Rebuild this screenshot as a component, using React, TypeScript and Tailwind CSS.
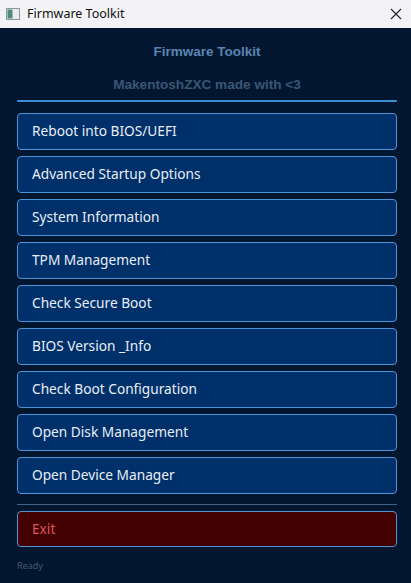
const actions = [
  "Reboot into BIOS/UEFI",
  "Advanced Startup Options",
  "System Information",
  "TPM Management",
  "Check Secure Boot",
  "BIOS Version _Info",
  "Check Boot Configuration",
  "Open Disk Management",
  "Open Device Manager",
]

function WindowIcon() {
  return (
    <svg width="14" height="12" viewBox="0 0 14 12">
      <rect x="0.5" y="0.5" width="13" height="11" fill="#e8ecec" stroke="#8a9a9a" />
      <rect x="1.5" y="1.5" width="5" height="9" fill="#4f8a82" />
    </svg>
  )
}

export default function App() {
  return (
    <div className="flex h-[583px] w-[411px] flex-col overflow-hidden bg-[#02172f] font-['Noto_Sans',sans-serif]">
      {/* title bar */}
      <div className="flex h-[28px] shrink-0 items-center bg-[#f3f3f6] pl-[6px] pr-[3px]">
        <WindowIcon />
        <span className="ml-[7px] text-[12.5px] text-[#111]">Firmware Toolkit</span>
        <span className="ml-auto flex h-[28px] w-[24px] items-center justify-center">
          <svg width="12" height="12" viewBox="0 0 12 12">
            <path d="M1 1L11 11M11 1L1 11" stroke="#222" strokeWidth="1.1" />
          </svg>
        </span>
      </div>

      <div className="flex flex-1 flex-col pl-[17px] pr-[14px]">
        <div className="pt-[15px] text-center font-['Liberation_Sans',sans-serif] text-[13.5px] font-bold leading-[18px] text-[#5b84b2]">
          Firmware Toolkit
        </div>
        <div className="mt-[15px] text-center font-['Liberation_Sans',sans-serif] text-[13.6px] font-bold leading-[18px] text-[#3a5676]">
          MakentoshZXC made with &lt;3
        </div>
        <div className="mt-[6px] h-[2px] rounded-full bg-[#3e8ed6]" />

        <div className="mt-[11px] flex flex-col gap-[6px]">
          {actions.map((label) => (
            <button
              key={label}
              className="flex h-[37px] items-center rounded-[4px] border border-[#4f94d6] bg-[#00306a] pl-[14px] text-left text-[13.7px] text-[#e8eef6]"
            >
              {label}
            </button>
          ))}
        </div>

        <div className="mt-[10px] h-px bg-[#3d6488]" />

        <button className="mt-[6px] flex h-[36px] items-center rounded-[4px] border border-[#4f94d6] bg-[#430000] pl-[14px] text-left text-[13.7px] text-[#dc575d]">
          Exit
        </button>

        <div className="mt-[12px] text-[9px] text-[#46586c]">Ready</div>
      </div>
    </div>
  )
}
